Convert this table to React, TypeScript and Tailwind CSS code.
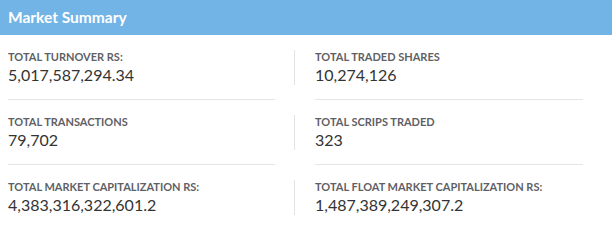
import React from "react";

type Stat = {
  label: string;
  value: string;
};

const rows: [Stat, Stat][] = [
  [
    { label: "TOTAL TURNOVER RS:", value: "5,017,587,294.34" },
    { label: "TOTAL TRADED SHARES", value: "10,274,126" },
  ],
  [
    { label: "TOTAL TRANSACTIONS", value: "79,702" },
    { label: "TOTAL SCRIPS TRADED", value: "323" },
  ],
  [
    { label: "TOTAL MARKET CAPITALIZATION RS:", value: "4,383,316,322,601.2" },
    { label: "TOTAL FLOAT MARKET CAPITALIZATION RS:", value: "1,487,389,249,307.2" },
  ],
];

const StatBlock: React.FC<{ stat: Stat }> = ({ stat }) => (
  <div className="h-[35px]">
    <div className="text-[11px] leading-[14px] font-bold text-[#5f5f66]">{stat.label}</div>
    <div className="text-[16px] leading-[21px] text-[#333]">{stat.value}</div>
  </div>
);

export default function App() {
  return (
    <div className="w-[612px] h-[241px] bg-white" style={{ fontFamily: "Lato, 'Noto Sans', sans-serif" }}>
      <div className="h-[35px] bg-[#72b4e6] flex items-center px-2">
        <h2 className="text-[15.5px] font-bold text-white">Market Summary</h2>
      </div>
      <div className="pt-[15px]">
        {rows.map((row, i) => (
          <div key={i} className="flex">
            <div className="w-[306px] pl-2">
              <div className="w-[287px] border-r border-[#e3e3e3]">
                <StatBlock stat={row[0]} />
              </div>
              {i < rows.length - 1 && <div className="w-[267px] mt-[14px] mb-[15px] border-t border-[#e5e5e5]" />}
            </div>
            <div className="w-[306px] pl-[9px]">
              <StatBlock stat={row[1]} />
              {i < rows.length - 1 && <div className="w-[268px] mt-[14px] mb-[15px] border-t border-[#e5e5e5]" />}
            </div>
          </div>
        ))}
      </div>
    </div>
  );
}
